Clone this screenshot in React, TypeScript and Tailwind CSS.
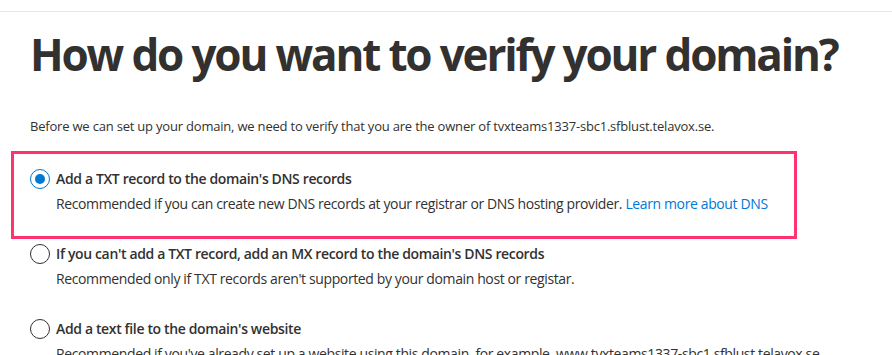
import React from "react";

const font = { fontFamily: '"Open Sans", "Noto Sans", Arial, sans-serif' };

function Radio({ checked }: { checked?: boolean }) {
  return (
    <span
      className={
        "flex h-[20px] w-[20px] shrink-0 items-center justify-center rounded-full border " +
        (checked ? "border-[#0078d4]" : "border-[#323130]")
      }
    >
      {checked && <span className="h-[10px] w-[10px] rounded-full bg-[#0078d4]" />}
    </span>
  );
}

function Option({
  checked,
  label,
  children,
}: {
  checked?: boolean;
  label: string;
  children: React.ReactNode;
}) {
  return (
    <div className="flex flex-col">
      <div className="flex h-[20px] items-center gap-[6px]">
        <Radio checked={checked} />
        <span className="text-[14px] font-semibold leading-[20px] tracking-[-0.36px] text-[#323130] whitespace-nowrap">
          {label}
        </span>
      </div>
      <div className="mt-[5px] pl-[26px] text-[14px] leading-[20px] tracking-[-0.38px] text-[#323130] whitespace-nowrap">
        {children}
      </div>
    </div>
  );
}

export default function App() {
  return (
    <div className="relative h-[355px] w-[892px] overflow-hidden bg-white" style={font}>
      <div className="h-[11px]" />
      <div className="border-t border-[#e6e6e6]" />
      <div className="pl-[30px]">
        <h1 className="mt-[16px] text-[44px] font-bold leading-[52px] tracking-[-2.15px] text-[#323130] whitespace-nowrap">
          How do you want to verify your domain?
        </h1>
        <p className="mt-[36px] text-[13px] leading-[20px] tracking-[-0.2px] text-[#323130] whitespace-nowrap">
          Before we can set up your domain, we need to verify that you are the owner of
          tvxteams1337-sbc1.sfblust.telavox.se.
        </p>
        <div className="mt-[33px] flex flex-col gap-[30px]">
          <Option checked label="Add a TXT record to the domain's DNS records">
            Recommended if you can create new DNS records at your registrar or DNS hosting
            provider. <span className="text-[#0078d4]">Learn more about DNS</span>
          </Option>
          <Option label="If you can't add a TXT record, add an MX record to the domain's DNS records">
            Recommended only if TXT records aren't supported by your domain host or registar.
          </Option>
          <Option label="Add a text file to the domain's website">
            Recommended if you've already set up a website using this domain, for example,
            www.tvxteams1337-sbc1.sfblust.telavox.se
          </Option>
        </div>
      </div>
      <div className="pointer-events-none absolute left-[11px] top-[151px] h-[88px] w-[786px] border-[3px] border-[#ff3370]" />
    </div>
  );
}
